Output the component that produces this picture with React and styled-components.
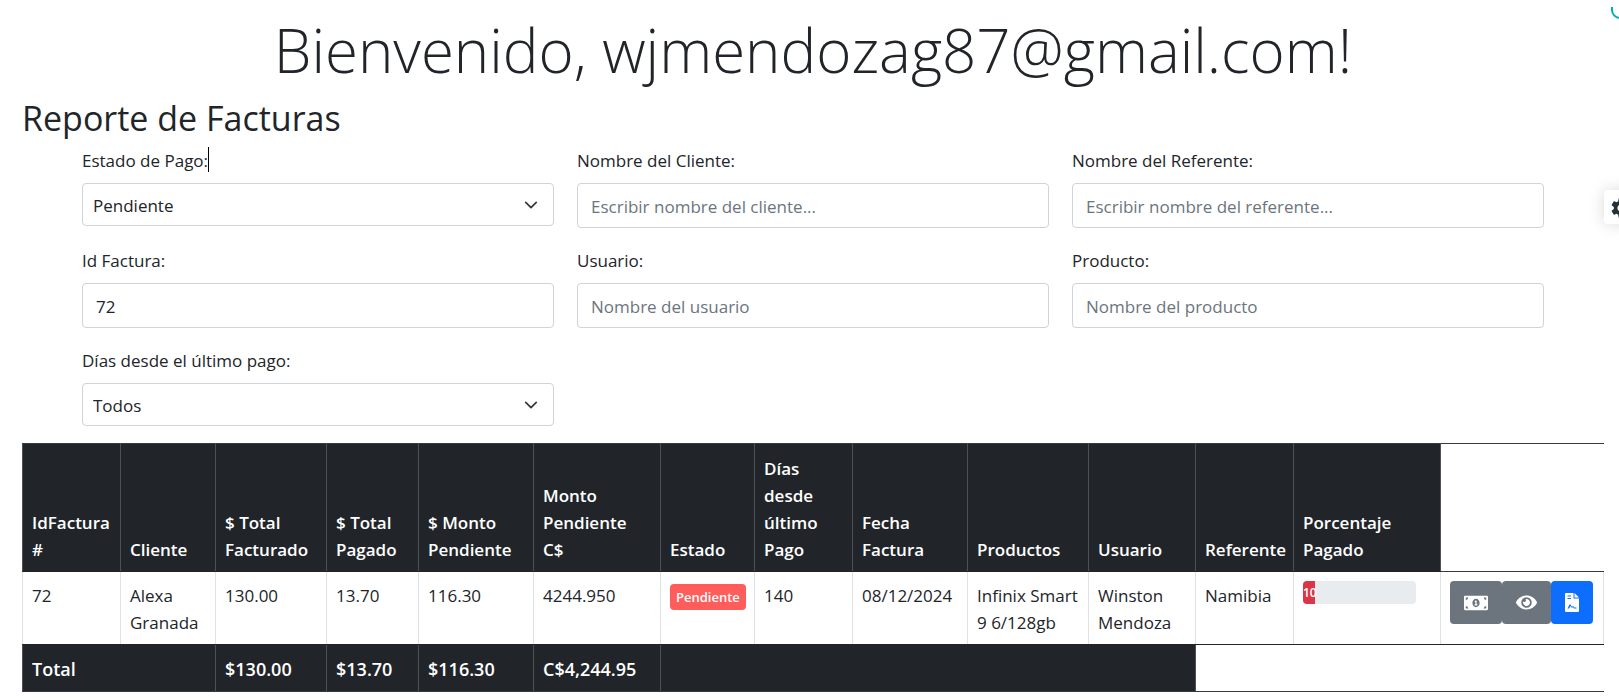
import React from "react"
import styled, { createGlobalStyle } from "styled-components"
import { FaMoneyBillAlt, FaEye } from "react-icons/fa"
import { MdSettings } from "react-icons/md"

const filters = [
  { id: "estado", label: "Estado de Pago:", options: ["Pendiente", "Pagada", "Todos"], caret: true },
  { id: "cliente", label: "Nombre del Cliente:", placeholder: "Escribir nombre del cliente..." },
  { id: "referente", label: "Nombre del Referente:", placeholder: "Escribir nombre del referente..." },
  { id: "factura", label: "Id Factura:", value: "72" },
  { id: "usuario", label: "Usuario:", placeholder: "Nombre del usuario" },
  { id: "producto", label: "Producto:", placeholder: "Nombre del producto" },
  { id: "dias", label: "Días desde el último pago:", options: ["Todos"] },
]

const columns = [
  { title: "IdFactura #", width: 98 },
  { title: "Cliente", width: 95 },
  { title: "$ Total Facturado", width: 111 },
  { title: "$ Total Pagado", width: 92 },
  { title: "$ Monto Pendiente", width: 115 },
  { title: "Monto Pendiente C$", width: 127 },
  { title: "Estado", width: 94 },
  { title: "Días desde último Pago", width: 98 },
  { title: "Fecha Factura", width: 115 },
  { title: "Productos", width: 121 },
  { title: "Usuario", width: 107 },
  { title: "Referente", width: 98 },
  { title: "Porcentaje Pagado", width: 147 },
  { title: "", width: 163 },
]

const facturas = [
  {
    id: 72,
    cliente: "Alexa Granada",
    total: "130.00",
    pagado: "13.70",
    monto: "116.30",
    montoCordobas: "4244.950",
    estado: "Pendiente",
    dias: 140,
    fecha: "08/12/2024",
    productos: "Infinix Smart 9 6/128gb",
    usuario: "Winston Mendoza",
    referente: "Namibia",
    porcentaje: 10.54,
  },
]

const Filter = ({ id, label, options, placeholder, value, caret }) => (
  <Field>
    <Label htmlFor={id}>
      {label}
      {caret && <Caret />}
    </Label>
    {options ? (
      <Select id={id} defaultValue={options[0]}>
        {options.map(option => (
          <option key={option}>{option}</option>
        ))}
      </Select>
    ) : (
      <Input id={id} type="text" placeholder={placeholder} defaultValue={value} />
    )}
  </Field>
)

const FileIcon = () => (
  <svg width="14" height="19" viewBox="0 0 14 19" fill="currentColor" aria-hidden="true">
    <path
      fillRule="evenodd"
      d="M1 0h7.500v5.500H14V18a1 1 0 0 1-1 1H1a1 1 0 0 1-1-1V1a1 1 0 0 1 1-1zM2.500 2.500v1h3.500v-1zM2.500 5v1h3.500V5zM2.500 15.500h1.500l1.500-2.500 1.500 2 1-1 1 1.500h2.500v-1h-2l-1.500-1.500-1 .8-1.500-2.300h-1l-1.500 3z"
    />
    <path d="M9.500 0L14 4.500H9.500z" />
  </svg>
)

const App = () => {
  return (
    <>
      <GlobalStyle />
      <Page>
        <Welcome>Bienvenido, wjmendozag87@gmail.com!</Welcome>
        <Heading>Reporte de Facturas</Heading>
        <Filters>
          {filters.map(filter => (
            <Filter key={filter.id} {...filter} />
          ))}
        </Filters>
        <Table>
          <colgroup>
            {columns.map(({ title, width }) => (
              <col key={title} style={{ width }} />
            ))}
          </colgroup>
          <thead>
            <tr>
              {columns.map(({ title }) =>
                title ? <HeadCell key={title}>{title}</HeadCell> : <Blank key="acciones" />
              )}
            </tr>
          </thead>
          <tbody>
            {facturas.map(factura => (
              <tr key={factura.id}>
                <Cell>{factura.id}</Cell>
                <Cell>{factura.cliente}</Cell>
                <Cell>{factura.total}</Cell>
                <Cell>{factura.pagado}</Cell>
                <Cell>{factura.monto}</Cell>
                <Cell>{factura.montoCordobas}</Cell>
                <Cell>
                  <Badge>{factura.estado}</Badge>
                </Cell>
                <Cell>{factura.dias}</Cell>
                <Cell>{factura.fecha}</Cell>
                <Cell>{factura.productos}</Cell>
                <Cell>{factura.usuario}</Cell>
                <Cell>{factura.referente}</Cell>
                <Cell $even>
                  <Progress role="progressbar" aria-valuenow={factura.porcentaje}>
                    <Bar style={{ width: `${factura.porcentaje}%` }}>
                      {Math.floor(factura.porcentaje)}
                    </Bar>
                  </Progress>
                </Cell>
                <Cell $even>
                  <Actions>
                    <Action type="button" aria-label="Abonar">
                      <FaMoneyBillAlt size={24} />
                    </Action>
                    <Action type="button" aria-label="Ver">
                      <FaEye size={21} />
                    </Action>
                    <Action type="button" aria-label="Documento" $primary>
                      <FileIcon />
                    </Action>
                  </Actions>
                </Cell>
              </tr>
            ))}
          </tbody>
          <tfoot>
            <tr>
              <TotalCell colSpan={2}>Total</TotalCell>
              <TotalCell>$130.00</TotalCell>
              <TotalCell>$13.70</TotalCell>
              <TotalCell>$116.30</TotalCell>
              <TotalCell>C$4,244.95</TotalCell>
              <TotalCell colSpan={5} />
              <Blank colSpan={3} />
            </tr>
          </tfoot>
        </Table>
      </Page>
      <Spinner viewBox="0 0 20 20" aria-hidden="true">
        <path d="M2 6v3a8 8 0 0 0 8 8h6" />
      </Spinner>
      <Settings type="button" aria-label="Configuración">
        <MdSettings size={24} />
      </Settings>
    </>
  )
}

const GlobalStyle = createGlobalStyle`
  * {
    box-sizing: border-box;
  }

  body {
    margin: 0;
    background: #fff;
    color: #212529;
    font-family: "Open Sans", "Noto Sans", sans-serif;
    font-size: 17px;
    line-height: 27px;
  }
`

const Page = styled.main`
  padding: 12px 15px 8px 22px;
`

const Welcome = styled.h1`
  margin: 0 0 9px;
  font-size: 60px;
  font-weight: 300;
  line-height: 76px;
  text-align: center;
`

const Heading = styled.h2`
  margin: 0 0 7px;
  font-size: 34px;
  font-weight: 400;
  line-height: 43px;
`

const Filters = styled.form`
  display: grid;
  grid-template-columns: repeat(3, 1fr);
  gap: 19px 23px;
  padding: 0 60px;
  margin-bottom: 17px;
`

const Field = styled.div`
  display: flex;
  flex-direction: column;
`

const Label = styled.label`
  display: flex;
  margin-bottom: 9px;
`

const Caret = styled.span`
  width: 1px;
  height: 25px;
  background: #000;
`

const Input = styled.input`
  width: 100%;
  height: 45px;
  padding: 2px 13px 0;
  border: 1px solid #ced4da;
  border-radius: 4px;
  background: #fff;
  color: #212529;
  font: inherit;

  &::placeholder {
    color: #6c757d;
    opacity: 1;
  }
`

const Select = styled.select`
  width: 100%;
  height: 43px;
  padding: 1px 40px 0 10px;
  border: 1px solid #ced4da;
  border-radius: 4px;
  appearance: none;
  background: #fff
    url("data:image/svg+xml,%3csvg xmlns='http://www.w3.org/2000/svg' viewBox='0 0 16 16'%3e%3cpath fill='none' stroke='%23343a40' stroke-linecap='round' stroke-linejoin='round' stroke-width='2' d='M2 5l6 6 6-6'/%3e%3c/svg%3e")
    no-repeat right 14px center / 16px 14px;
  color: #212529;
  font: inherit;
`

const Table = styled.table`
  width: 100%;
  table-layout: fixed;
  border-collapse: collapse;
`

const HeadCell = styled.th`
  height: 128px;
  padding: 10px 9px 8px;
  border: 1px solid #4d5154;
  border-top-color: #373b3e;
  border-bottom-color: #212529;
  background: #212529;
  color: #fff;
  font-weight: 600;
  text-align: left;
  vertical-align: bottom;
`

const Cell = styled.td`
  padding: ${({ $even }) => ($even ? "9px" : "10px 9px 8px")};
  border: 1px solid #dee2e6;
  border-top-color: #212529;
  border-bottom-color: #212529;
  vertical-align: top;
`

const TotalCell = styled.td`
  height: 47px;
  padding: 10px 9px 8px;
  border: 1px solid #4d5154;
  border-bottom-color: #373b3e;
  background: #212529;
  color: #fff;
  font-size: 18px;
  font-weight: 600;
`

const Blank = styled.td`
  border-top: 1px solid #373b3e;
  border-bottom: 1px solid #373b3e;
`

const Badge = styled.span`
  display: inline-block;
  padding: 6px;
  border-radius: 4px;
  background: #ff5c5c;
  color: #fff;
  font-size: 13px;
  font-weight: 600;
  line-height: 14px;
  vertical-align: middle;
`

const Progress = styled.div`
  width: 113px;
  height: 23px;
  overflow: hidden;
  border-radius: 4px;
  background: #e9ecef;
`

const Bar = styled.div`
  height: 100%;
  background: #dc3545;
  color: #fff;
  font-size: 12px;
  font-weight: 600;
  line-height: 23px;
`

const Actions = styled.div`
  display: flex;
`

const Action = styled.button`
  display: flex;
  align-items: center;
  justify-content: center;
  height: 43px;
  padding: 0 14px;
  border: 0;
  border-radius: 4px;
  background: ${({ $primary }) => ($primary ? "#0d6efd" : "#6c757d")};
  color: #fff;
`

const Spinner = styled.svg`
  position: fixed;
  top: 1px;
  right: -11px;
  width: 20px;
  height: 20px;
  fill: none;
  stroke: #00b0b0;
  stroke-width: 2;
`

const Settings = styled.button`
  position: fixed;
  top: 190px;
  right: -19px;
  display: flex;
  width: 34px;
  height: 34px;
  padding: 6px 5px;
  border: 0;
  border-radius: 4px;
  background: #fff;
  color: #263238;
  box-shadow: 0 0 16px rgba(0, 0, 0, 0.15);
`

export default App
